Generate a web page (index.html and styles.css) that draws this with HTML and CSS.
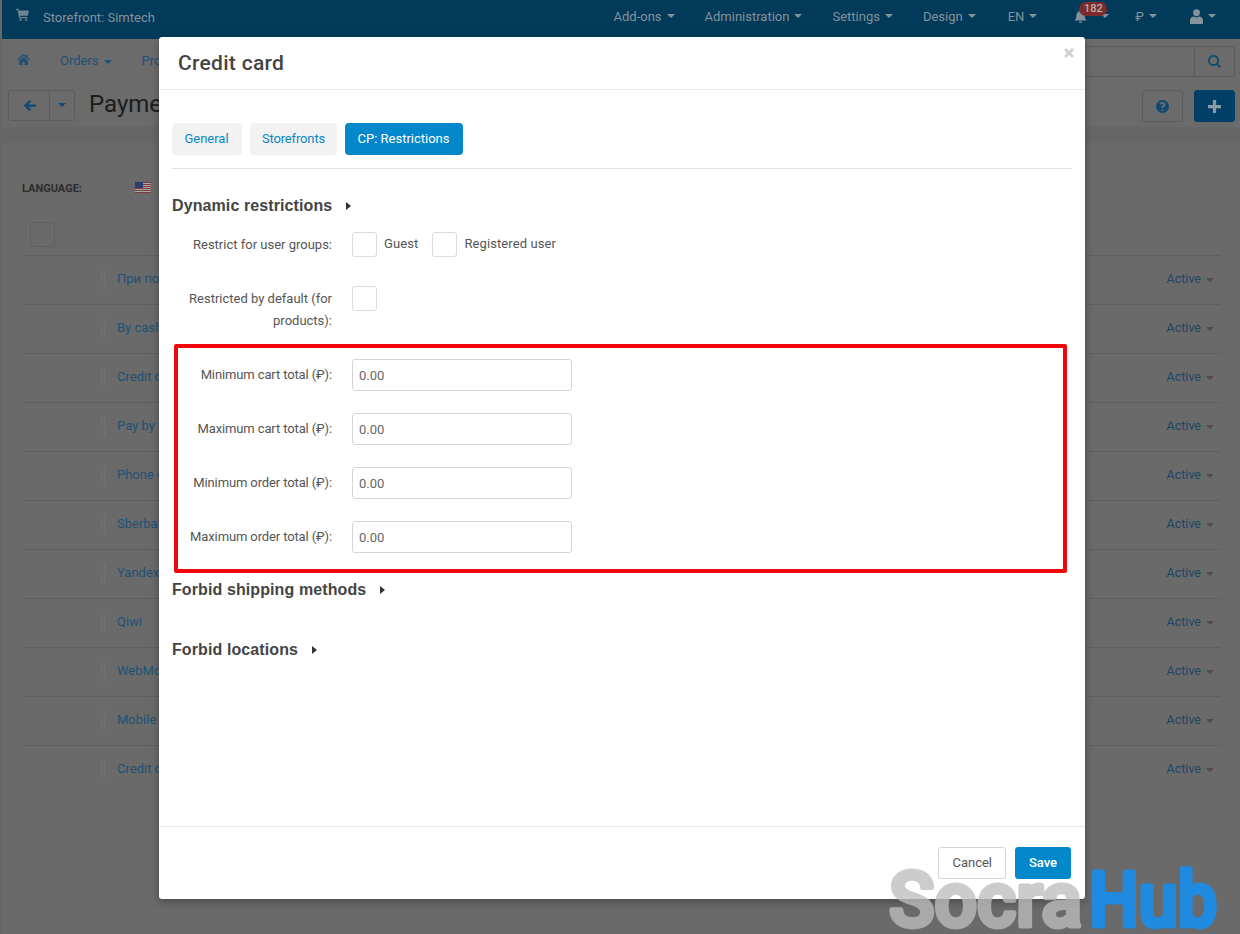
FILE: index.html
```html
<!DOCTYPE html>
<html lang="en">
<head>
  <meta charset="UTF-8" />
  <title>Payment methods</title>
  <link rel="stylesheet" href="styles.css">
</head>
<body>
  <div class="page">
    <div class="topbar">
      <svg class="icon cart" viewBox="0 0 16 16"><path d="M0 1h3l.5 2H16l-1.500 6.500H5l.4 1.500H14v1.500H4L1.800 2.500H0z"/><circle cx="5.500" cy="14.500" r="1.400"/><circle cx="12.500" cy="14.500" r="1.400"/></svg>
      <span class="store">Storefront: Simtech</span>
      <div class="topmenu">
        <span class="topitem">Add-ons<i class="caret"></i></span>
        <span class="topitem">Administration<i class="caret"></i></span>
        <span class="topitem">Settings<i class="caret"></i></span>
        <span class="topitem">Design<i class="caret"></i></span>
        <span class="topitem lang">EN<i class="caret"></i></span>
        <span class="topitem bell">
          <svg class="icon" viewBox="0 0 16 16"><path d="M8 0a1.300 1.300 0 0 1 1.200 1.500C11.800 2 13 4 13 6.500c0 3.500 1 5 2.500 6.500H.5C2 11.500 3 10 3 6.500 3 4 4.200 2 6.800 1.500A1.300 1.300 0 0 1 8 0zM6 14h4a2 2 0 0 1-4 0z"/></svg>
          <b class="badge">182</b><i class="caret"></i>
        </span>
        <span class="topitem ruble">₽<i class="caret"></i></span>
        <span class="topitem account">
          <svg class="icon user" viewBox="0 0 14 16"><circle cx="7" cy="4" r="3.700"/><path d="M0 16v-3.500C0 9.500 2 8 4 8c1 1 5 1 6 0 2 0 4 1.500 4 4.500V16z"/></svg>
          <i class="caret"></i>
        </span>
      </div>
    </div>

    <div class="nav">
      <svg class="icon home" viewBox="0 0 16 14"><path d="M8 0l3 2.600V1h2v3.300L16 7l-1 1.100-7-6-7 6L0 7z"/><path d="M2.500 8.500L8 3.800l5.500 4.700V14H9.500v-4h-3v4h-4z"/></svg>
      <span class="navitem">Orders<i class="caret"></i></span>
      <span class="navitem">Products<i class="caret"></i></span>
      <div class="search">
        <span class="search-btn"><svg class="icon" viewBox="0 0 16 16"><path d="M6.800 0a6.800 6.800 0 0 1 5.500 10.800l3.400 3.400-1.600 1.600-3.400-3.400A6.800 6.800 0 1 1 6.800 0zm0 2.300a4.500 4.500 0 1 0 0 9 4.500 4.500 0 0 0 0-9z"/></svg></span>
      </div>
    </div>

    <div class="toolbar">
      <div class="backgroup">
        <span class="back"><svg class="icon" viewBox="0 0 14 14"><path d="M7 1l1.800 1.800L5.600 5.800H14v2.500H5.600l3.200 3.100L7 13.200 .8 7z"/></svg></span>
        <span class="backmore"><i class="caret"></i></span>
      </div>
      <h1 class="pagetitle">Payment methods</h1>
      <span class="toolbtn"><svg class="icon" viewBox="0 0 16 16"><path fill-rule="evenodd" d="M8 0a8 8 0 1 1 0 16A8 8 0 0 1 8 0zM6.900 11.500v2.200h2.200v-2.200zM8 2.500C6.200 2.500 5 3.300 4.300 4.600l1.500 1.200c.5-.7 1-1.200 1.900-1.200.8 0 1.300.4 1.300 1 0 .6-.4.900-1.100 1.300-.8.500-1 1.200-1 2.100v.8h2.200v-.5c0-.5.200-.7.900-1.100 1-.6 1.700-1.300 1.700-2.700 0-1.700-1.500-2.800-3.700-2.800z"/></svg></span>
      <span class="toolbtn primary"><svg class="icon" viewBox="0 0 12 12"><path d="M4.500 0h3v4.500H12v3H7.500V12h-3V7.500H0v-3h4.500z"/></svg></span>
    </div>

    <div class="content">
      <div class="language">
        <span class="langlabel">LANGUAGE:</span>
        <svg class="flag" viewBox="0 0 16 11"><rect width="16" height="11" fill="#7f3a3a"/><path d="M0 1.500h16M0 3.500h16M0 5.500h16M0 7.500h16M0 9.500h16" stroke="#a8a8a8"/><rect width="8" height="6" fill="#2c3f6e"/></svg>
      </div>
      <div class="listhead"><span class="checkbox dim"></span></div>
      <div class="row"><span class="drag"></span><a class="rowname">При получении</a><span class="status">Active<i class="caret"></i></span></div>
      <div class="row"><span class="drag"></span><a class="rowname">By cash</a><span class="status">Active<i class="caret"></i></span></div>
      <div class="row"><span class="drag"></span><a class="rowname">Credit card</a><span class="status">Active<i class="caret"></i></span></div>
      <div class="row"><span class="drag"></span><a class="rowname">Pay by phone</a><span class="status">Active<i class="caret"></i></span></div>
      <div class="row"><span class="drag"></span><a class="rowname">Phone ordering</a><span class="status">Active<i class="caret"></i></span></div>
      <div class="row"><span class="drag"></span><a class="rowname">Sberbank</a><span class="status">Active<i class="caret"></i></span></div>
      <div class="row"><span class="drag"></span><a class="rowname">Yandex.Money</a><span class="status">Active<i class="caret"></i></span></div>
      <div class="row"><span class="drag"></span><a class="rowname">Qiwi</a><span class="status">Active<i class="caret"></i></span></div>
      <div class="row"><span class="drag"></span><a class="rowname">WebMoney</a><span class="status">Active<i class="caret"></i></span></div>
      <div class="row"><span class="drag"></span><a class="rowname">Mobile</a><span class="status">Active<i class="caret"></i></span></div>
      <div class="row"><span class="drag"></span><a class="rowname">Credit card</a><span class="status">Active<i class="caret"></i></span></div>
    </div>
  </div>

  <div class="modal">
    <div class="modal-head">
      <h2>Credit card</h2>
      <svg class="close" viewBox="0 0 10 10"><path d="M2 0l3 3 3-3 2 2-3 3 3 3-2 2-3-3-3 3-2-2 3-3-3-3z"/></svg>
    </div>
    <div class="modal-body">
      <div class="tabs">
        <span class="tab tab-general">General</span>
        <span class="tab tab-stores">Storefronts</span>
        <span class="tab tab-cp active">CP: Restrictions</span>
      </div>

      <h3 class="section first">Dynamic restrictions<i class="arrow"></i></h3>
      <div class="field groups">
        <label class="fieldlabel">Restrict for user groups:</label>
        <div class="checks">
          <span class="checkbox"></span><span class="checktext">Guest</span>
          <span class="checkbox"></span><span class="checktext">Registered user</span>
        </div>
      </div>
      <div class="field bydefault">
        <label class="fieldlabel">Restricted by default (for products):</label>
        <span class="checkbox"></span>
      </div>

      <div class="highlight">
        <div class="field total"><label class="fieldlabel">Minimum cart total (₽):</label><input class="textinput" value="0.00"></div>
        <div class="field total"><label class="fieldlabel">Maximum cart total (₽):</label><input class="textinput" value="0.00"></div>
        <div class="field total"><label class="fieldlabel">Minimum order total (₽):</label><input class="textinput" value="0.00"></div>
        <div class="field total"><label class="fieldlabel">Maximum order total (₽):</label><input class="textinput" value="0.00"></div>
      </div>

      <h3 class="section shipping">Forbid shipping methods<i class="arrow"></i></h3>
      <h3 class="section locations">Forbid locations<i class="arrow"></i></h3>
    </div>
    <div class="modal-foot">
      <button class="btn">Cancel</button>
      <button class="btn save">Save</button>
    </div>
  </div>

  <svg class="watermark" viewBox="0 0 340 80">
    <text class="socra" x="5" y="62" textLength="193" lengthAdjust="spacingAndGlyphs">Socra</text>
    <text class="hub" x="205" y="62" textLength="128" lengthAdjust="spacingAndGlyphs">Hub</text>
  </svg>
</body>
</html>
```

FILE: styles.css
```css
html, body { margin: 0; padding: 0; height: 934px; overflow: hidden; }
body { font-family: Roboto, "Liberation Sans", sans-serif; font-size: 13px; background: #666; color: #333; }
.page { height: 934px; padding-left: 2px; box-sizing: border-box; overflow: hidden; }
.icon { display: block; fill: currentColor; }
.caret { display: inline-block; width: 0; height: 0; margin-left: 5px; vertical-align: middle; border-top: 4px solid currentColor; border-left: 4px solid transparent; border-right: 4px solid transparent; }

/* top bar */
.topbar { height: 39px; background: #023a5a; color: #84929c; display: flex; align-items: center; padding: 0 24px 5px 14px; box-sizing: border-box; }
.cart { width: 13px; height: 13px; margin-top: -5px; color: #6f8494; }
.store { margin-left: 14px; }
.topmenu { margin-left: auto; margin-top: -2px; display: flex; align-items: center; gap: 30px; }
.topitem { display: flex; align-items: center; position: relative; }
.lang { margin-left: 2px; }
.bell { width: 35px; margin-left: 7px; margin-right: -4px; }
.bell .icon { width: 15px; height: 15px; }
.bell .caret { margin-left: 14px; }
.badge { position: absolute; left: 5px; top: -7px; width: 28px; height: 14px; border-radius: 7px; background: #7c2c2c; color: #b9b0b0; font-size: 11px; font-weight: 500; line-height: 14px; text-align: center; }
.account { margin-left: 3px; }
.user { width: 13px; height: 15px; }

/* nav */
.nav { height: 41px; background: #6b6b6b; display: flex; align-items: center; padding: 2px 5px 0 15px; color: #1d5275; box-sizing: border-box; }
.home { width: 13px; height: 11px; margin-top: -2px; }
.navitem { margin-left: 30px; }
.search { margin-left: auto; margin-top: 2px; width: 420px; height: 31px; border: 1px solid #5b5b5b; border-radius: 3px; box-sizing: border-box; display: flex; justify-content: flex-end; }
.search-btn { width: 39px; border-left: 1px solid #5b5b5b; display: flex; align-items: center; justify-content: center; color: #0e4a73; }
.search-btn .icon { width: 13px; height: 13px; }

/* toolbar */
.toolbar { height: 47px; background: #6b6b6b; display: flex; align-items: center; padding: 0 5px 0 6px; box-sizing: border-box; }
.backgroup { display: flex; height: 31px; width: 67px; margin-top: 3px; border: 1px solid #5b5b5b; border-radius: 3px; box-sizing: border-box; color: #0e4a73; }
.back { width: 40px; border-right: 1px solid #5b5b5b; display: flex; align-items: center; justify-content: center; }
.back .icon { width: 13px; height: 13px; }
.backmore { flex: 1; display: flex; align-items: center; justify-content: center; }
.backmore .caret { margin: 0; }
.pagetitle { margin: 0 0 0 14px; font-size: 24px; font-weight: 400; color: #1c1c1c; }
.toolbtn { width: 41px; height: 32px; margin-top: 5px; margin-left: auto; border: 1px solid #5b5b5b; border-radius: 3px; box-sizing: border-box; display: flex; align-items: center; justify-content: center; color: #0e4a73; }
.toolbtn .icon { width: 13px; height: 13px; }
.toolbtn.primary { margin-left: 11px; background: #023f66; border-color: #023f66; color: #8a9aa6; }

/* list behind the dialog */
.content { margin-top: 16px; background: #6a6a6a; height: 800px; padding: 0 19px 0 22px; }
.language { height: 79px; display: flex; align-items: center; padding-top: 11px; box-sizing: border-box; }
.langlabel { font-size: 11px; font-weight: 700; color: #2d2d2d; margin-left: -2px; width: 113px; }
.flag { width: 16px; height: 11px; margin-top: -2px; }
.listhead { height: 33px; padding-left: 6px; }
.row { height: 49px; padding-bottom: 3px; border-top: 1px solid #5f5f5f; box-sizing: border-box; display: flex; align-items: center; }
.drag { width: 7px; height: 20px; margin-left: 76px; background-image: radial-gradient(#8a8a8a 1px, transparent 1px); background-size: 3px 3px; opacity: .6; }
.rowname { margin-left: 10px; color: #1d5275; }
.status { margin-left: auto; margin-right: 7px; color: #1d4666; font-size: 12.5px; }
.status .caret { color: #4d4d4d; }
.checkbox { display: inline-block; width: 25px; height: 25px; box-sizing: border-box; background: #fff; border: 1px solid #dcdcdc; border-radius: 3px; flex: none; }
.checkbox.dim { background: transparent; border-color: #5f5f5f; }

/* dialog */
.modal { position: absolute; left: 159px; top: 37px; width: 926px; height: 862px; background: #fff; border-radius: 3px; display: flex; flex-direction: column; box-shadow: 0 3px 9px rgba(0,0,0,.3); }
.modal-head { height: 53px; border-bottom: 1px solid #e8e8e8; box-sizing: border-box; position: relative; padding: 12px 19px; }
.modal-head h2 { margin: 0; font-size: 21px; font-weight: 500; letter-spacing: .3px; line-height: 28px; color: #444; }
.close { position: absolute; right: 11px; top: 11px; width: 10px; height: 10px; fill: #cfcfcf; }
.modal-body { flex: 1; padding: 33px 13px 0; }
.tabs { display: flex; gap: 8px; height: 32px; padding-bottom: 13px; border-bottom: 1px solid #e3e3e3; }
.tab { height: 32px; line-height: 32px; text-align: center; background: #f2f2f2; border-radius: 4px; color: #0b87c7; }
.tab-general { width: 70px; padding-right: 1px; box-sizing: border-box; }
.tab-stores { width: 87px; letter-spacing: -.15px; }
.tab-cp { width: 118px; padding-right: 1px; box-sizing: border-box; }
.tab.active { background: #0388cc; color: #fff; }
.section { margin: 0; font-family: "Liberation Sans", Arial, sans-serif; font-size: 16px; font-weight: 700; letter-spacing: .1px; line-height: 20px; color: #444; }
.section.first { margin-top: 27px; }
.section.shipping { margin-top: 7px; }
.section.locations { margin-top: 40px; }
.arrow { display: inline-block; width: 0; height: 0; margin-left: 14px; vertical-align: 1px; border-left: 5px solid #333; border-top: 4px solid transparent; border-bottom: 4px solid transparent; }
.field { display: flex; }
.fieldlabel { width: 160px; margin-right: 20px; text-align: right; color: #555; line-height: 22px; flex: none; }
.groups { margin-top: 16px; height: 54px; }
.groups .fieldlabel { padding-top: 2px; }
.checks { display: flex; gap: 7px; color: #555; line-height: 22px; }
.checktext { margin-right: 6px; padding-top: 1px; letter-spacing: .1px; }
.checktext:nth-child(2) { margin-right: 7px; }
.bydefault { height: 58px; }
.bydefault .fieldlabel { padding-top: 2px; }
.highlight { margin-left: 2px; width: 893px; height: 229px; box-sizing: border-box; border: 4px solid #f2060c; border-radius: 2px; padding-top: 11px; }
.total { height: 54px; }
.total .fieldlabel { width: 154px; padding-top: 5px; letter-spacing: -.12px; }
.textinput { width: 220px; height: 32px; box-sizing: border-box; border: 1px solid #d5d5d5; border-radius: 3px; padding: 0 6px; font-family: inherit; font-size: 13px; color: #666; }
.modal-foot { height: 73px; border-top: 1px solid #e8e8e8; box-sizing: border-box; display: flex; justify-content: flex-end; gap: 9px; padding: 20px 14px 0 0; }
.btn { height: 32px; padding: 0 13px 2px; background: #fff; border: 1px solid #d5d5d5; border-radius: 3px; font-family: inherit; font-size: 13px; color: #555; }
.btn.save { width: 56px; padding: 0 0 2px; background: #0388cc; border-color: #0388cc; color: #fff; font-weight: 500; }

/* watermark */
.watermark { position: absolute; left: 884px; top: 864px; width: 340px; height: 80px; font-family: Roboto, sans-serif; font-size: 76px; font-weight: 500; stroke-width: 5px; stroke-linejoin: round; }
.socra { fill: #bebebe; stroke: #bebebe; opacity: .77; }
.hub { fill: #1f8ae0; stroke: #1f8ae0; }
```
